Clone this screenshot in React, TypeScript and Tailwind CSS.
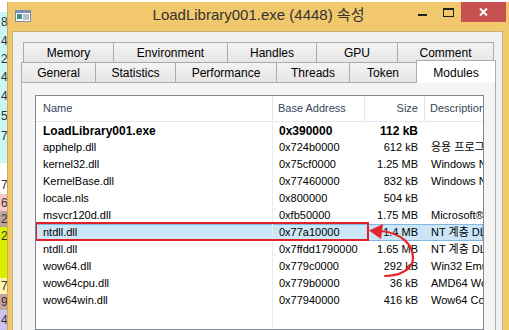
import React from 'react';

const font = "font-['Liberation_Sans','Noto_Sans_CJK_KR',sans-serif]";

// what peeks out from the window behind, on the left edge
const backdrop = [
  { h: 'h-[12px]', bg: 'bg-white', d: '' },
  { h: 'h-[19px]', bg: 'bg-[#c9f6f6]', d: '8' },
  { h: 'h-[19px]', bg: 'bg-[#c9f6f6]', d: '4' },
  { h: 'h-[17px]', bg: 'bg-[#c9f6f6]', d: '2' },
  { h: 'h-[19px]', bg: 'bg-[#c9f6f6]', d: '4' },
  { h: 'h-[19px]', bg: 'bg-[#c9f6f6]', d: '4' },
  { h: 'h-[21px]', bg: 'bg-[#c9f6f6]', d: '5' },
  { h: 'h-[19px]', bg: 'bg-[#c9f6f6]', d: '7' },
  { h: 'h-[18px]', bg: 'bg-[#c9f6f6]', d: '' },
  { h: 'h-[13px]', bg: 'bg-white', d: '' },
  { h: 'h-[18px]', bg: 'bg-white', d: '7' },
  { h: 'h-[17px]', bg: 'bg-[#f6c7cd]', d: '6' },
  { h: 'h-[16px]', bg: 'bg-[#bea39c]', d: '2' },
  { h: 'h-[17px]', bg: 'bg-[#d6f000]', d: '2' },
  { h: 'h-[34px]', bg: 'bg-[#d6f000]', d: '' },
  { h: 'h-[16px]', bg: 'bg-[#fff3b3]', d: '7' },
  { h: 'h-[16px]', bg: 'bg-[#c3a3a3]', d: '9' },
  { h: 'h-[20px]', bg: 'bg-[#c9c4f3]', d: '4' },
];

const topTabs = [
  { label: 'Memory', w: 'w-[90px]' },
  { label: 'Environment', w: 'w-[114px]' },
  { label: 'Handles', w: 'w-[89px]' },
  { label: 'GPU', w: 'w-[81px]' },
  { label: 'Comment', w: 'w-[97px]' },
];

const frontTabs = [
  { label: 'General', w: 'w-[74px]' },
  { label: 'Statistics', w: 'w-[80px]' },
  { label: 'Performance', w: 'w-[101px]' },
  { label: 'Threads', w: 'w-[73px]' },
  { label: 'Token', w: 'w-[67px]' },
];

interface Module {
  name: string;
  base: string;
  size: string;
  desc: string;
  bold?: boolean;
  selected?: boolean;
}

const modules: Module[] = [
  { name: 'LoadLibrary001.exe', base: '0x390000', size: '112 kB', desc: '', bold: true },
  { name: 'apphelp.dll', base: '0x724b0000', size: '612 kB', desc: '응용 프로그램 호환성 클라이언트 라이브러리' },
  { name: 'kernel32.dll', base: '0x75cf0000', size: '1.25 MB', desc: 'Windows NT BASE API Client DLL' },
  { name: 'KernelBase.dll', base: '0x77460000', size: '832 kB', desc: 'Windows NT BASE API Client DLL' },
  { name: 'locale.nls', base: '0x800000', size: '504 kB', desc: '' },
  { name: 'msvcr120d.dll', base: '0xfb50000', size: '1.75 MB', desc: 'Microsoft® C Runtime Library' },
  { name: 'ntdll.dll', base: '0x77a10000', size: '1.4 MB', desc: 'NT 계층 DLL', selected: true },
  { name: 'ntdll.dll', base: '0x7ffdd1790000', size: '1.65 MB', desc: 'NT 계층 DLL' },
  { name: 'wow64.dll', base: '0x779c0000', size: '292 kB', desc: 'Win32 Emulation on NT64' },
  { name: 'wow64cpu.dll', base: '0x779b0000', size: '36 kB', desc: 'AMD64 Wow64 CPU' },
  { name: 'wow64win.dll', base: '0x77940000', size: '416 kB', desc: 'Wow64 Console and Win32 API Logging' },
];

const cols = 'grid grid-cols-[237px_92px_60px_minmax(0,1fr)]';

const WindowIcon = () => (
  <svg width="16" height="12" viewBox="0 0 16 12">
    <rect x="0.5" y="0.5" width="15" height="11" fill="#fff" stroke="#7d8fa6" />
    <rect x="1" y="1" width="14" height="2" fill="#7393c2" />
    <rect x="2" y="4" width="5" height="5" fill="#3f8c86" />
    <rect x="8" y="4.5" width="6" height="1" fill="#6f819b" />
    <rect x="8" y="6.5" width="6" height="1" fill="#6f819b" />
    <rect x="8" y="8.5" width="6" height="1" fill="#6f819b" />
  </svg>
);

export default function App() {
  return (
    <div className={`relative flex w-[509px] h-[330px] overflow-hidden bg-white ${font}`}>
      {/* Backdrop strip */}
      <div className="flex flex-col w-[7px] shrink-0 overflow-hidden">
        {backdrop.map((b, i) => (
          <div key={i} className={`${b.h} ${b.bg} flex items-center pl-[1px] text-[12px] text-[#333] leading-none`}>
            {b.d}
          </div>
        ))}
      </div>

      {/* Properties window */}
      <div className="flex-1 min-w-0 mt-[2px] flex flex-col bg-[#f1c86c] border-l border-[#d2a850]">
        {/* Title bar */}
        <div className="h-[29px] shrink-0 grid grid-cols-[1fr_auto_1fr]">
          <div className="flex items-center pl-[7px] pb-[2px]">
            <WindowIcon />
          </div>
          <div className="flex items-center pb-[2px] text-[15px] text-[#333]">
            LoadLibrary001.exe (4448) 속성
          </div>
          <div className="flex justify-end items-start pr-[3px]">
            <div className="w-[26px] h-[20px] flex justify-center">
              <div className="mt-[12px] w-[9px] h-[2px] bg-[#222]" />
            </div>
            <div className="w-[26px] h-[20px] flex justify-center">
              <div className="mt-[6px] w-[11px] h-[9px] border border-t-2 border-[#222]" />
            </div>
            <div className="w-[45px] h-[20px] bg-[#c75050] flex items-center justify-center">
              <svg width="9" height="8" viewBox="0 0 9 8">
                <path d="M1 0.5 L8 7.5 M8 0.5 L1 7.5" stroke="#fff" strokeWidth="2" />
              </svg>
            </div>
          </div>
        </div>

        {/* Client area */}
        <div className="flex-1 ml-[4px] mr-[6px] flex flex-col bg-[#f0f0f0] border-t border-l border-r border-[#c9b07a] pl-[8px] pt-[10px]">
          {/* back row of tabs */}
          <div className="flex pl-[2px] h-[20px] shrink-0">
            {topTabs.map((t, i) => (
              <div
                key={t.label}
                className={`${t.w} h-[20px] flex items-center justify-center text-[12px] text-black border-t border-l border-[#acacac] bg-linear-to-b from-[#f3f3f3] to-[#e6e6e6] ${i === topTabs.length - 1 ? 'border-r' : ''}`}
              >
                {t.label}
              </div>
            ))}
          </div>
          {/* front row of tabs */}
          <div className="flex h-[20px] shrink-0 items-start">
            {frontTabs.map((t) => (
              <div
                key={t.label}
                className={`${t.w} h-[20px] flex items-center justify-center text-[12px] text-black border-t border-l border-[#acacac] bg-linear-to-b from-[#f3f3f3] to-[#e6e6e6]`}
              >
                {t.label}
              </div>
            ))}
            <div className="relative z-10 w-[80px] h-[23px] -mt-[2px] flex justify-center pt-[3px] text-[12px] text-black bg-white border-t border-l border-r border-[#acacac]">
              Modules
            </div>
          </div>

          {/* Tab page */}
          <div className="flex-1 w-[475px] flex flex-col bg-[#f4f4f4] border-t border-l border-r border-[#acacac] pl-[13px] pt-[12px]">
            <div className="flex-1 w-[449px] flex flex-col bg-white border border-[#828790] overflow-hidden text-[11px]">
              {/* header */}
              <div className={`${cols} h-[26px] shrink-0 border-b border-[#e3e8ef] text-[#364559]`}>
                <div className="flex items-center pl-[7px] border-r border-[#e5e5e5]">Name</div>
                <div className="flex items-center pl-[5px] border-r border-[#e5e5e5]">Base Address</div>
                <div className="flex items-center justify-end pr-[6px] border-r border-[#e5e5e5]">Size</div>
                <div className="flex items-center pl-[5px] whitespace-nowrap overflow-hidden">Description</div>
              </div>

              {/* rows */}
              {modules.map((m, i) => (
                <div
                  key={i}
                  className={`${cols} relative h-[17px] shrink-0 text-black ${m.bold ? 'font-bold text-[12px]' : ''} ${m.selected ? 'bg-[#cbe6f7] shadow-[inset_0_0_0_1px_#7fb8e3]' : ''}`}
                >
                  <div className="flex items-center pl-[7px] border-r border-[#ebebeb] whitespace-nowrap">{m.name}</div>
                  <div className="flex items-center pl-[6px] whitespace-nowrap">{m.base}</div>
                  <div className="flex items-center justify-end pr-[7px] whitespace-nowrap">{m.size}</div>
                  <div className="flex items-center pl-[6px] whitespace-nowrap overflow-hidden">{m.desc}</div>
                  {m.selected && (
                    <div className="absolute left-[-1px] top-[-2px] w-[334px] h-[19px] border-2 border-[#e41f26]" />
                  )}
                </div>
              ))}

              {/* empty area below rows */}
              <div className={`${cols} flex-1`}>
                <div className="border-r border-[#ebebeb]" />
              </div>
            </div>
          </div>
        </div>
      </div>

      {/* annotation arrow */}
      <svg className="absolute inset-0 pointer-events-none" width="509" height="330" viewBox="0 0 509 330">
        <path
          d="M385 276 C398 276 413 270 413 258 C413 245 402 233 381 231"
          fill="none"
          stroke="#e3262b"
          strokeWidth="2.2"
          strokeLinecap="round"
        />
        <polygon points="369,230.5 383,224 381,239" fill="#e3262b" />
      </svg>
    </div>
  );
}
